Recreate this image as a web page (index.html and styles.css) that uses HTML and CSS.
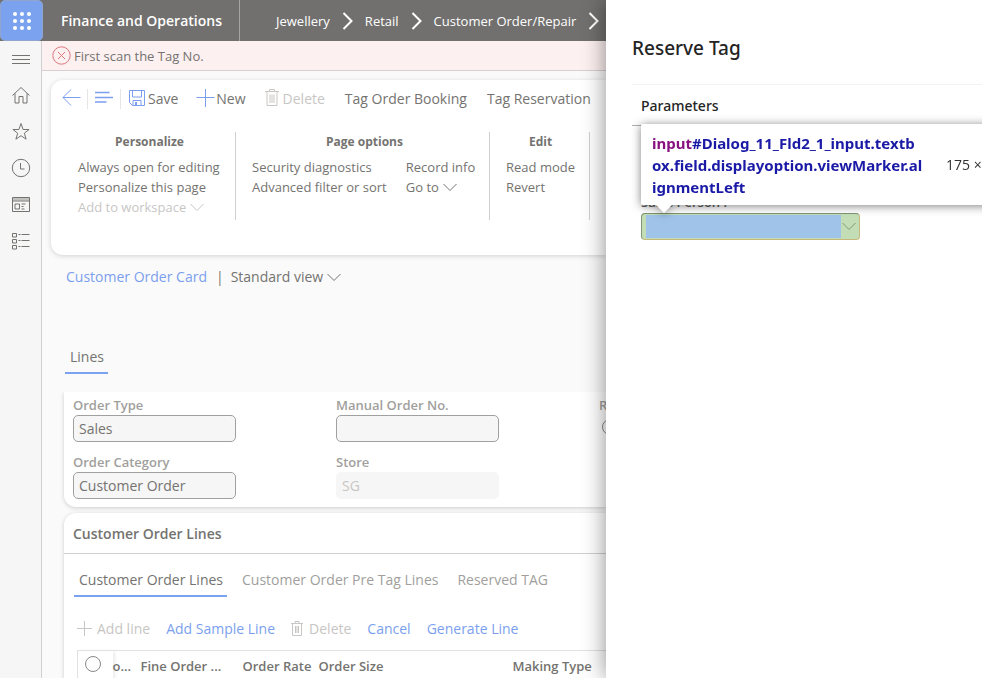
FILE: index.html
```html
<!DOCTYPE html>
<html lang="en">
<head>
<meta charset="utf-8">
<meta name="viewport" content="width=device-width, initial-scale=1">
<title>Finance and Operations</title>
<link rel="stylesheet" href="styles.css">
</head>
<body>
<div class="app">
  <div class="workspace">
    <header class="topbar">
      <button class="launcher" aria-label="App launcher">
        <svg width="20" height="20" viewBox="0 0 20 20" fill="#fff"><circle cx="3" cy="3" r="2"/><circle cx="10" cy="3" r="2"/><circle cx="17" cy="3" r="2"/><circle cx="3" cy="10" r="2"/><circle cx="10" cy="10" r="2"/><circle cx="17" cy="10" r="2"/><circle cx="3" cy="17" r="2"/><circle cx="10" cy="17" r="2"/><circle cx="17" cy="17" r="2"/></svg>
      </button>
      <div class="brand">Finance and Operations</div>
      <nav class="crumbs">
        <a href="#">Jewellery</a>
        <svg class="crumb-sep" width="13" height="20" viewBox="0 0 13 20"><path d="M2.500 2l8 8-8 8"/></svg>
        <a href="#">Retail</a>
        <svg class="crumb-sep" width="13" height="20" viewBox="0 0 13 20"><path d="M2.500 2l8 8-8 8"/></svg>
        <a href="#">Customer Order/Repair</a>
        <svg class="crumb-sep" width="13" height="20" viewBox="0 0 13 20"><path d="M2.500 2l8 8-8 8"/></svg>
      </nav>
    </header>
    <div class="body">
      <nav class="rail">
        <button aria-label="Menu"><svg width="20" height="20" viewBox="0 0 20 20"><path d="M1 5.500h18M1 9.500h18M1 13.500h18"/></svg></button>
        <button aria-label="Home"><svg width="20" height="20" viewBox="0 0 20 20"><path d="M1.500 9.500L10 1.500l8.500 8M4 7.500v9.500h4v-6.500h4v6.500h4V7.500"/></svg></button>
        <button aria-label="Favorites"><svg width="20" height="20" viewBox="0 0 20 20"><path d="M10 1.500l2.100 6h6l-4.800 3.700 1.800 6L10 13.700 4.900 17.200l1.800-6L1.900 7.500h6z"/></svg></button>
        <button aria-label="Recent"><svg width="20" height="20" viewBox="0 0 20 20"><circle cx="10" cy="10" r="8.700"/><path d="M9.500 5v6h4"/></svg></button>
        <button aria-label="Workspaces"><svg width="20" height="20" viewBox="0 0 20 20"><path d="M1.500 3.500h17v14h-17zM1.500 7h17M4 10h4.500v5H4zM10.500 10h4M10.500 12.500h2M10.500 15h3"/><path d="M2 5.200h16" stroke-width="2.500" opacity=".4"/></svg></button>
        <button aria-label="Modules"><svg width="20" height="20" viewBox="0 0 20 20"><path d="M1.500 3.500h4v3.500h-4zM1.500 9.500h4V13h-4zM1.500 15.500h4V19h-4zM7.500 4.500h2M10.500 4.500h8M7.500 10.500h2M10.500 10.500h8M7.500 16.500h2M10.500 16.500h8"/></svg></button>
      </nav>
      <main class="page">
        <div class="alert" role="alert">
          <svg width="19" height="19" viewBox="0 0 19 19"><circle cx="9.500" cy="9.500" r="8.700"/><path d="M6 6l7 7M13 6l-7 7"/></svg>
          <span>First scan the Tag No.</span>
        </div>
        <section class="actionpane">
          <div class="toolbar">
            <button class="back" aria-label="Back"><svg class="blue" width="20" height="20" viewBox="0 0 20 20"><path d="M10 .5l-8 8 8 8M2 8.500h17.500"/></svg></button>
            <button class="related" aria-label="Show list"><svg class="blue" width="20" height="20" viewBox="0 0 20 20"><path d="M1 3.500h14.500M1 8.500h18M1 13h11.500" stroke-width="1.500"/></svg></button>
            <button class="save"><svg class="blue" width="18" height="18" viewBox="0 0 18 18"><path d="M.5.500h15v15H3.500l-3-3zM3.500.500v6.500h9V.500M4 15.500v-5h8v5M6.500 12v3.500M7.500 12v3.500"/></svg>Save</button>
            <button class="new"><svg class="blue" width="20" height="20" viewBox="0 0 20 20"><path d="M9.500 0v18M.5 8.500h18"/></svg>New</button>
            <button class="delete" disabled><svg width="16" height="20" viewBox="0 0 16 20"><path d="M0 2.500h14M4.500 2.500v-2h5v2M2 2.500v14h10v-14M5 5.500V14M7 5.500V14M9 5.500V14"/></svg>Delete</button>
            <button>Tag Order Booking</button>
            <button>Tag Reservation</button>
          </div>
          <div class="groups">
            <div class="group personalize">
              <h3>Personalize</h3>
              <div class="cols"><div class="links">
                <button>Always open for editing</button>
                <button>Personalize this page</button>
                <button disabled>Add to workspace <svg class="chev" width="14" height="9" viewBox="0 0 14 9"><path d="M.5 1l6.500 6.500L13.500 1"/></svg></button>
              </div></div>
            </div>
            <div class="group options">
              <h3>Page options</h3>
              <div class="cols">
                <div class="links">
                  <button>Security diagnostics</button>
                  <button>Advanced filter or sort</button>
                </div>
                <div class="links">
                  <button>Record info</button>
                  <button>Go to <svg class="chev" width="14" height="9" viewBox="0 0 14 9"><path d="M.5 1l6.500 6.500L13.500 1"/></svg></button>
                </div>
              </div>
            </div>
            <div class="group edit">
              <h3>Edit</h3>
              <div class="cols"><div class="links">
                <button>Read mode</button>
                <button>Revert</button>
              </div></div>
            </div>
          </div>
        </section>
        <div class="viewbar">
          <a href="#">Customer Order Card</a><span class="bar">|</span>
          <button>Standard view <svg class="chev" width="14" height="9" viewBox="0 0 14 9"><path d="M.5 1l6.500 6.500L13.500 1"/></svg></button>
        </div>
        <div class="maintabs"><button class="tab active">Lines</button></div>
        <section class="card fields">
          <div class="field"><label for="otype">Order Type</label><input id="otype" value="Sales"></div>
          <div class="field"><label for="manual">Manual Order No.</label><input id="manual"></div>
          <div class="field"><label for="rate">R</label><input id="rate" type="radio"></div>
          <div class="field"><label for="ocat">Order Category</label><input id="ocat" value="Customer Order"></div>
          <div class="field"><label for="store">Store</label><input id="store" value="SG" disabled></div>
        </section>
        <section class="card lines">
          <h2>Customer Order Lines</h2>
          <div class="tabs">
            <button class="tab active">Customer Order Lines</button>
            <button class="tab">Customer Order Pre Tag Lines</button>
            <button class="tab">Reserved TAG</button>
          </div>
          <div class="lineactions">
            <button disabled><svg width="16" height="16" viewBox="0 0 16 16"><path d="M7.500 0v15M0 7.500h15"/></svg>Add line</button>
            <button>Add Sample Line</button>
            <button disabled><svg width="14" height="17" viewBox="0 0 14 17"><path d="M0 2.500h12M4 2.500v-2h4v2M1.500 2.500v12h9v-12M4.500 5v7M6 5v7M7.500 5v7"/></svg>Delete</button>
            <button>Cancel</button>
            <button>Generate Line</button>
          </div>
          <table>
            <colgroup><col class="c-check"><col class="c-no"><col class="c-fine"><col class="c-rate"><col class="c-size"><col class="c-making"></colgroup>
            <thead><tr>
              <th class="check"><input type="radio" aria-label="Select all rows"></th>
              <th>o...</th><th>Fine Order ...</th><th>Order Rate</th><th>Order Size</th><th>Making Type</th>
            </tr></thead>
          </table>
        </section>
      </main>
    </div>
  </div>
  <aside class="dialog">
    <h1>Reserve Tag</h1>
    <section class="params">
      <h2>Parameters</h2>
      <div class="person">
        <label for="person">Sales Person :</label>
        <div class="combo">
          <input id="person" role="combobox" aria-expanded="false">
          <svg class="chev" width="14" height="9" viewBox="0 0 14 9"><path d="M.5 1l6.500 6.500L13.500 1"/></svg>
          <div class="tip" role="tooltip">
            <div class="selector"><span class="tag">input</span>#Dialog_11_Fld2_1_input.textb<br>ox.field.displayoption.viewMarker.al<br>ignmentLeft</div>
            <div class="size">175&nbsp;×</div>
          </div>
        </div>
      </div>
    </section>
  </aside>
</div>
</body>
</html>
```
FILE: styles.css
```css
* { box-sizing: border-box; }
body {
  margin: 0;
  font: 14px/20px "Open Sans", "Noto Sans", sans-serif;
  color: #747370;
  background: #fff;
}
button {
  font: inherit;
  color: inherit;
  background: none;
  border: 0;
  padding: 0;
  white-space: nowrap;
  text-align: left;
}
button:disabled { color: #c8c6c4; }
a { text-decoration: none; color: #7b9fee; white-space: nowrap; }
svg { display: block; flex: none; fill: none; stroke: currentColor; }
h1, h2, h3 { margin: 0; white-space: nowrap; }

.app { display: flex; height: 100vh; overflow: hidden; }
.workspace {
  flex: 1;
  min-width: 0;
  display: flex;
  flex-direction: column;
  overflow: hidden;
}

.topbar { display: flex; height: 41px; flex: none; background: #71706e; color: #fff; }
.launcher {
  display: grid;
  place-items: center;
  width: 43px;
  flex: none;
  background: #7ba2ee;
  border: 1px solid #8fa5d0;
  border-radius: 5px;
}
.launcher svg { stroke: none; fill: #fff; }
.brand {
  width: 197px;
  flex: none;
  padding-left: 18px;
  line-height: 41px;
  font-weight: 600;
  white-space: nowrap;
  border-right: 1px solid #a5a4a2;
}
.crumbs { display: flex; align-items: center; gap: 11px; padding-left: 36px; font-size: 13px; }
.crumbs a { color: #fff; }
.crumb-sep { stroke: #fff; stroke-width: 2; }

.body { flex: 1; display: flex; min-height: 0; }
.rail {
  width: 42px;
  flex: none;
  display: flex;
  flex-direction: column;
  align-items: center;
  gap: 16px;
  padding-top: 9px;
  background: #f6f6f6;
  border-right: 1px solid #d0d0d0;
}
.page {
  flex: 1;
  min-width: 0;
  display: flex;
  flex-direction: column;
  overflow: hidden;
  background: #fafafa;
}
.alert {
  display: flex;
  align-items: center;
  gap: 3px;
  height: 30px;
  flex: none;
  padding-left: 10px;
  font-size: 13px;
  background: #fdf0f0;
  border-bottom: 1px solid #d8d0d0;
}
.alert svg { stroke: #d9777b; }

.actionpane {
  margin: 9px 0 0 9px;
  height: 175px;
  flex: none;
  background: #fff;
  border-radius: 12px 0 0 12px;
  box-shadow: 0 1px 5px rgba(0, 0, 0, .16);
}
.toolbar { display: flex; align-items: center; height: 38px; padding-left: 10px; gap: 20px; }
.toolbar button { display: flex; align-items: center; flex: none; }
.toolbar .blue { color: #7b9fee; }
.toolbar .back, .toolbar .related { margin-right: -14px; padding-right: 6px; border-right: 1px solid #e6e6e6; }
.toolbar .save { margin: 0 -2px 0 2px; gap: 1px; }
.toolbar .delete { margin-left: -1px; gap: 2px; }

.groups { display: flex; padding-top: 14px; font-size: 13px; }
.group { flex: none; height: 88px; }
.group h3 { font-size: 12px; font-weight: 700; line-height: 20px; text-align: center; }
.cols { display: flex; gap: 19px; padding-top: 5px; }
.links { display: flex; flex-direction: column; }
.links button, .viewbar button { display: flex; align-items: center; gap: 4px; }
.personalize { width: 185px; padding: 0 14px 0 27px; border-right: 1px solid #d0d0d0; }
.options { width: 254px; padding: 0 12px 0 16px; border-right: 1px solid #d0d0d0; }
.edit { width: 100px; padding: 0 14px 0 16px; border-right: 1px solid #d0d0d0; }

.viewbar { display: flex; flex: none; padding: 12px 0 0 24px; }
.viewbar .bar { padding: 0 7px 0 9px; }

.tab { border-bottom: 2px solid transparent; color: #a19f9d; }
.tab.active { color: #747370; border-color: #7ba2ee; }
.maintabs { flex: none; padding: 60px 0 18px 23px; }
.maintabs .tab { padding: 0 4px 5px 5px; display: block; }

.card {
  flex: none;
  margin-left: 22px;
  background: #fff;
  box-shadow: 0 1px 4px rgba(0, 0, 0, .18);
}
.fields {
  display: grid;
  grid-template-columns: repeat(3, 263px);
  row-gap: 10px;
  padding: 3px 0 8px 9px;
  border-radius: 0 0 0 12px;
  clip-path: inset(0 0 -6px -6px);
}
.field { display: flex; flex-direction: column; }
.field label { font-size: 13px; font-weight: 600; line-height: 20px; color: #a19f9d; white-space: nowrap; }
.field input:not([type="radio"]) {
  width: 163px;
  height: 27px;
  padding: 0 5px 1px;
  font: inherit;
  color: #747370;
  background: #f6f6f6;
  border: 1px solid #a0a0a0;
  border-radius: 5px;
}
.field input:disabled { color: #c8c6c4; border-color: #f6f6f6; }
input[type="radio"] {
  appearance: none;
  width: 16px;
  height: 16px;
  margin: 4px 3px;
  border: 1px solid #8a8886;
  border-radius: 50%;
}

.lines { margin-top: 6px; border-radius: 12px 0 0 0; flex: 1; }
.lines h2 { font-size: 14px; font-weight: 600; line-height: 38px; padding: 2px 0 0 9px; border-bottom: 1px solid #d0d0d0; }
.tabs { display: flex; gap: 10px; padding: 16px 0 0 10px; }
.tabs .tab { padding: 0 4px 5px 5px; }
.lineactions { display: flex; gap: 16px; padding: 22px 0 11px 13px; color: #7b9fee; }
.lineactions button { display: flex; align-items: center; gap: 4px; }

table { table-layout: fixed; width: 620px; margin-left: 13px; border-collapse: collapse; border-top: 1px solid #e1e1e1; border-left: 1px solid #e1e1e1; }
th { padding: 0; height: 30px; font-size: 13px; font-weight: 600; text-align: left; white-space: nowrap; }
th.check input { display: block; margin: 0 0 3px 7px; }
th.check { box-shadow: 2px 0 3px rgba(0, 0, 0, .08); }
.c-check { width: 35px; }
.c-no { width: 28px; }
.c-fine { width: 102px; }
.c-rate { width: 76px; }
.c-size { width: 194px; }

.dialog {
  width: 376px;
  flex: none;
  position: relative;
  padding-left: 26px;
  background: #fff;
  box-shadow: 0 0 22px rgba(0, 0, 0, .45);
  color: #242424;
}
.dialog h1 { padding-top: 34px; font-family: "Noto Sans", "Open Sans", sans-serif; font-size: 19px; line-height: 28px; font-weight: 500; }
.params { margin-top: 22px; border-top: 1px solid #f3f3f3; }
.params h2 { font-family: "Noto Sans", "Open Sans", sans-serif; font-size: 14px; line-height: 38px; font-weight: 500; padding: 2px 0 0 9px; border-bottom: 1px solid #b0b0b0; }
.person { padding: 65px 0 0 9px; }
.person label { display: block; font-size: 13px; font-weight: 600; line-height: 22px; color: #605e5c; }
.combo { position: relative; width: 219px; color: #7f9a76; }
.combo input {
  display: block;
  width: 100%;
  height: 27px;
  padding: 1px 18px 1px 4px;
  border: 1px solid;
  border-color: #7c9672 #c7b97c #c7b97c #7c9672;
  border-radius: 4px;
  background: linear-gradient(#a0c4e9, #a0c4e9) content-box, #c3deb7;
}
.combo .chev { position: absolute; right: 4px; top: 9px; }
.tip {
  position: absolute;
  left: 0;
  bottom: 35px;
  width: 400px;
  display: flex;
  align-items: center;
  gap: 16px;
  padding: 8px 11px 7px;
  background: #fff;
  border-radius: 2px;
  filter: drop-shadow(0 1px 5px rgba(0, 0, 0, .5));
  line-height: 22px;
}
.tip::after {
  content: "";
  position: absolute;
  left: 15px;
  top: 100%;
  border: 8px solid transparent;
  border-top-color: #fff;
  border-bottom: 0;
}
.selector { width: 278px; font-family: "Noto Sans", "Open Sans", sans-serif; font-weight: 700; color: #1a1aa6; white-space: nowrap; font-size: 15px; }
.selector .tag { color: #881280; }
.size { color: #303030; white-space: nowrap; }
```
